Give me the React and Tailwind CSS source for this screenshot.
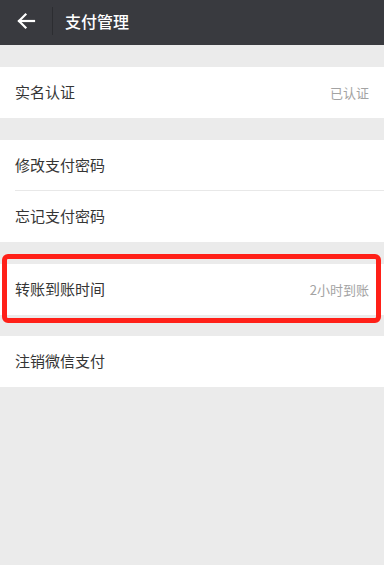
const Row = ({ label, value, divider }) => (
  <div className="relative flex h-[51px] items-center justify-between bg-white pl-[15px] pr-[15px]">
    <span className="text-[15px] text-[#353535]">{label}</span>
    {value && <span className="text-[13px] text-[#a3a3a3]">{value}</span>}
    {divider && <div className="absolute bottom-0 left-[15px] right-0 h-px bg-[#e8e8e8]"></div>}
  </div>
)

export default function App() {
  return (
    <div
      className="min-h-[565px] bg-[#ebebeb]"
      style={{ fontFamily: '"Noto Sans CJK SC", "Noto Sans", sans-serif' }}
    >
      {/* Header */}
      <div className="flex h-[45px] items-center bg-[#393a3f] pb-[3px]">
        <div className="flex w-[52px] justify-center">
          <svg width="20" height="18" viewBox="0 0 20 18" fill="none" stroke="white" strokeWidth="2.2" strokeLinecap="square">
            <path d="M18 9H3" />
            <path d="M9.5 2.5L3 9l6.5 6.5" />
          </svg>
        </div>
        <div className="h-[28px] w-px bg-[#2c2d31]"></div>
        <span className="ml-[12px] text-[16px] font-medium text-white">支付管理</span>
      </div>

      <div className="h-[22px]"></div>
      <Row label="实名认证" value="已认证" />

      <div className="h-[22px]"></div>
      <Row label="修改支付密码" divider />
      <Row label="忘记支付密码" />

      <div className="h-[22px]"></div>
      <div className="relative">
        <Row label="转账到账时间" value="2小时到账" />
        <div className="absolute -top-[10px] -bottom-[8px] left-[2px] right-[3px] rounded-[6px] border-[5px] border-[#ff2018]"></div>
      </div>

      <div className="h-[21px]"></div>
      <Row label="注销微信支付" />
    </div>
  )
}
